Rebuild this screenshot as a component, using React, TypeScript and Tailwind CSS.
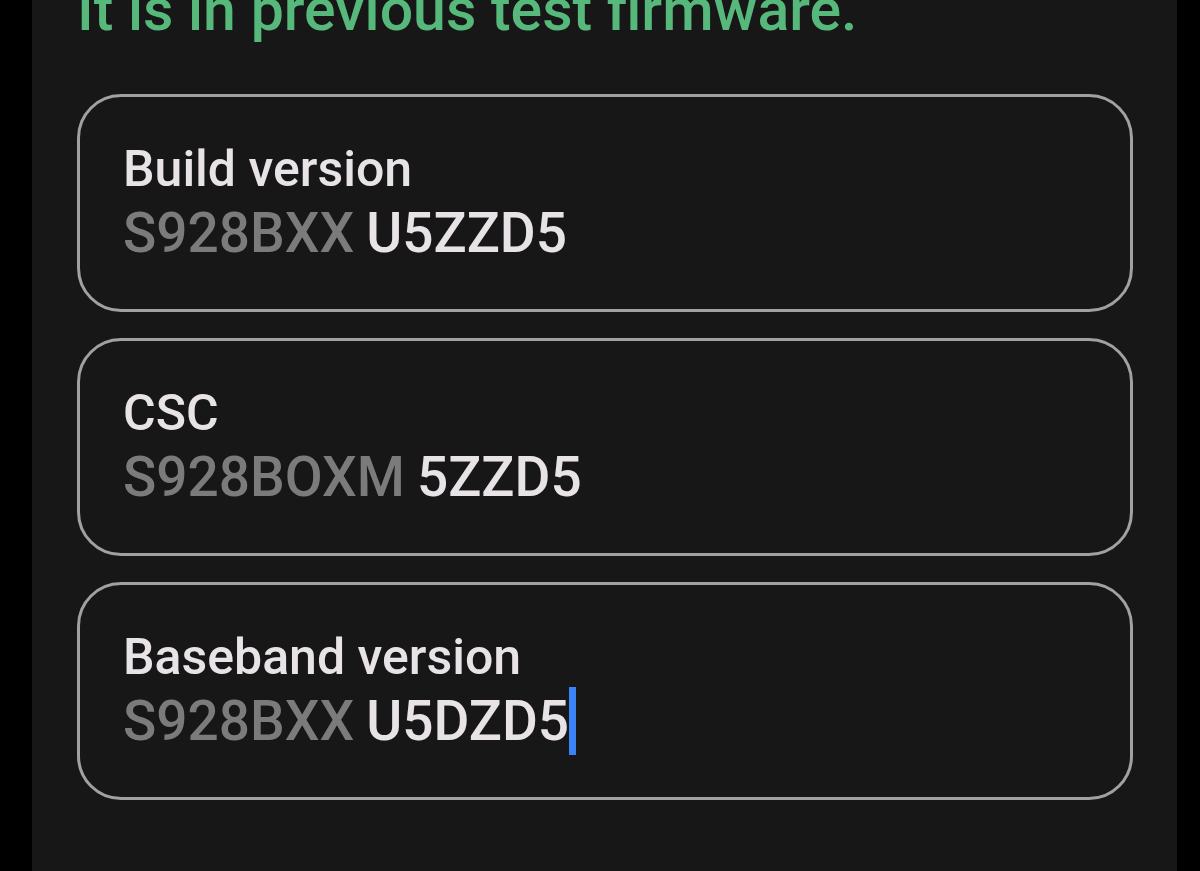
type Field = {
  id: string;
  label: string;
  prefix: string;
  value: string;
  active?: boolean;
};

const fields: Field[] = [
  { id: "build", label: "Build version", prefix: "S928BXX", value: "U5ZZD5" },
  { id: "csc", label: "CSC", prefix: "S928BOXM", value: "5ZZD5" },
  { id: "baseband", label: "Baseband version", prefix: "S928BXX", value: "U5DZD5", active: true },
];

function VersionField({ id, label, prefix, value, active }: Field) {
  return (
    <div className="rounded-[44px] border-3 border-[#a2a1a2] px-[43px] pt-10 pb-11">
      <label htmlFor={id} className="block text-[50px] leading-16 font-medium text-[#e8e3e7]">
        {label}
      </label>
      <div className="flex h-16 items-center text-[55px] leading-16">
        <span className="font-medium text-[#7b7b7b]">{prefix}</span>
        <input
          id={id}
          type="text"
          defaultValue={value}
          spellCheck={false}
          className="ml-3 field-sizing-content h-16 bg-transparent p-0 font-medium text-[#e8e3e7] caret-transparent outline-none"
        />
        {active && <span aria-hidden="true" className="h-[68px] w-[7px] shrink-0 bg-[#3b82f6]" />}
      </div>
    </div>
  );
}

export default function App() {
  return (
    <div className="min-h-screen bg-black pr-[23px] pl-8 font-['Roboto',sans-serif]">
      <main className="min-h-screen overflow-hidden bg-[#171717] pr-11 pl-[45px]">
        <h1 className="-mt-[22px] text-[59px] leading-16 font-medium whitespace-nowrap text-[#57b87b]">
          It is in previous test firmware.
        </h1>
        <form className="mt-[52px] flex flex-col gap-[26px] pb-[72px]">
          {fields.map((field) => (
            <VersionField key={field.id} {...field} />
          ))}
        </form>
      </main>
    </div>
  );
}
